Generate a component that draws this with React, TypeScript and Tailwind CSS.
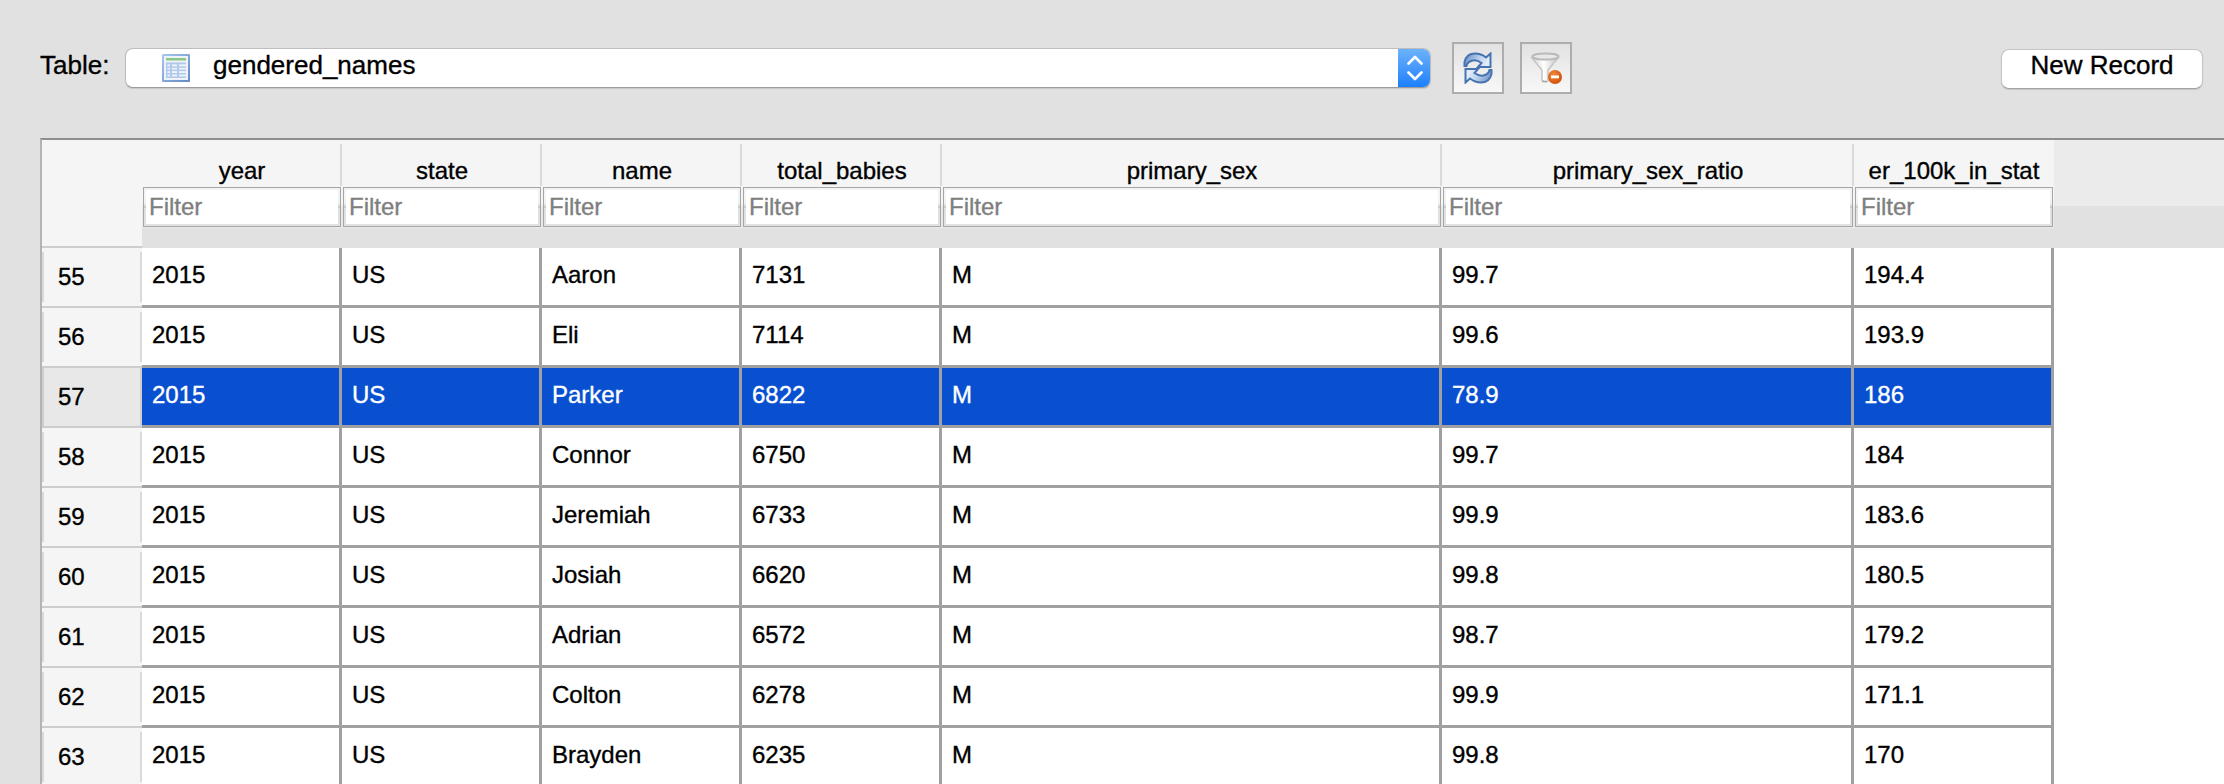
import React from "react";

const columns = [
  { name: "year", w: "w-[200px]" },
  { name: "state", w: "w-[200px]" },
  { name: "name", w: "w-[200px]" },
  { name: "total_babies", w: "w-[200px]" },
  { name: "primary_sex", w: "w-[500px]" },
  { name: "primary_sex_ratio", w: "w-[412px]" },
  { name: "er_100k_in_stat", w: "w-[200px]" },
];

const rows: [number, string[]][] = [
  [55, ["2015", "US", "Aaron", "7131", "M", "99.7", "194.4"]],
  [56, ["2015", "US", "Eli", "7114", "M", "99.6", "193.9"]],
  [57, ["2015", "US", "Parker", "6822", "M", "78.9", "186"]],
  [58, ["2015", "US", "Connor", "6750", "M", "99.7", "184"]],
  [59, ["2015", "US", "Jeremiah", "6733", "M", "99.9", "183.6"]],
  [60, ["2015", "US", "Josiah", "6620", "M", "99.8", "180.5"]],
  [61, ["2015", "US", "Adrian", "6572", "M", "98.7", "179.2"]],
  [62, ["2015", "US", "Colton", "6278", "M", "99.9", "171.1"]],
  [63, ["2015", "US", "Brayden", "6235", "M", "99.8", "170"]],
];
const selectedId = 57;

function TableIcon() {
  return (
    <svg width="28" height="28" viewBox="0 0 28 28" className="block shrink-0">
      <defs>
        <linearGradient id="tableFrame" x1="0" y1="0" x2="1" y2="1">
          <stop offset="0" stopColor="#a9c8ee" />
          <stop offset="1" stopColor="#6389c4" />
        </linearGradient>
      </defs>
      <rect width="28" height="28" rx="1" fill="url(#tableFrame)" />
      <rect x="2" y="2" width="24" height="24" fill="#eef3fa" />
      <rect x="4" y="4" width="20" height="2.5" fill="#8cc883" />
      <g fill="#b0c9ec">
        <rect x="4" y="8.500" width="20" height="1.800" />
        <rect x="4" y="12.300" width="20" height="1.500" />
        <rect x="4" y="15.600" width="20" height="1.500" />
        <rect x="4" y="19" width="20" height="1.500" />
        <rect x="4" y="22.400" width="20" height="1.500" />
        <rect x="4" y="8.500" width="1.500" height="15.400" />
        <rect x="8" y="8.500" width="2" height="15.400" />
        <rect x="15" y="8.500" width="2" height="15.400" />
      </g>
    </svg>
  );
}

function RefreshIcon() {
  const arrow = "M1.500 14V10Q3.500 1.500 12 1.500Q18 1.500 23 5.500L27.500 1.500V15H15L18.500 11Q13 7 8 9Q4 10.500 3.500 14Z";
  return (
    <svg width="30" height="32" viewBox="0 0 30 32">
      <defs>
        <linearGradient id="arrow" x1="0" y1="0" x2="1" y2="0.3">
          <stop offset="0" stopColor="#5f8ac4" />
          <stop offset="0.6" stopColor="#b9cfeb" />
          <stop offset="1" stopColor="#e2edf9" />
        </linearGradient>
      </defs>
      <g fill="url(#arrow)" stroke="#4774b1" strokeWidth="2">
        <path d={arrow} />
        <path d={arrow} transform="rotate(180 15 16)" />
      </g>
    </svg>
  );
}

function ClearFilterIcon() {
  return (
    <svg width="32" height="32" viewBox="0 0 32 32">
      <defs>
        <linearGradient id="funnel" x1="0" y1="0" x2="1" y2="0">
          <stop offset="0" stopColor="#d4d4d4" />
          <stop offset="0.45" stopColor="#ffffff" />
          <stop offset="1" stopColor="#c8c8c8" />
        </linearGradient>
        <radialGradient id="badge" cx="0.4" cy="0.35" r="0.7">
          <stop offset="0" stopColor="#f58a38" />
          <stop offset="1" stopColor="#cd4c06" />
        </radialGradient>
      </defs>
      <path d="M2 6L12 18V28Q15 31 18 29V18L28 6Z" fill="url(#funnel)" stroke="#c4c4c4" strokeWidth="1.500" />
      <ellipse cx="15.500" cy="4.500" rx="13" ry="3" fill="#e8e8e8" stroke="#bababa" strokeWidth="2" />
      <path d="M12 29.500H17" stroke="#a5a5a5" strokeWidth="1.500" />
      <circle cx="25" cy="25" r="7" fill="url(#badge)" />
      <rect x="21" y="23.500" width="8" height="2.800" fill="#fff" />
    </svg>
  );
}

export default function App() {
  return (
    <div className="flex h-[784px] w-[2224px] flex-col overflow-hidden bg-[#e1e1e1] font-['Liberation_Sans',Arial,sans-serif] text-[24px] leading-[27px] text-black [-webkit-text-stroke-width:0.35px]">
      <div className="flex h-[138px] shrink-0 items-start pl-10 text-[26px] leading-[30px]">
        <span className="mt-[50px] w-[85px] shrink-0 whitespace-nowrap">Table:</span>
        <div className="mt-12 flex h-10 w-[1306px] shrink-0 overflow-hidden rounded-[8px] border border-[#bdbdbd] border-b-[#9c9c9c] bg-white shadow-[0_1px_1px_rgba(0,0,0,0.12)]">
          <div className="flex flex-1 items-start pl-9 pt-[5px]">
            <TableIcon />
            <span className="-mt-[4px] ml-[23px]">gendered_names</span>
          </div>
          <div className="-my-px -mr-px flex w-[33px] items-center justify-center bg-linear-to-b from-[#6cb3fa] to-[#157efb]">
            <svg width="16" height="26" viewBox="0 0 16 26" fill="none" stroke="#fff" strokeWidth="2.600" strokeLinecap="round" strokeLinejoin="round">
              <path d="M1.500 8.500L8 2L14.500 8.500M1.500 17.500L8 24L14.500 17.500" />
            </svg>
          </div>
        </div>
        <button className="ml-[21px] mt-[42px] flex size-[52px] shrink-0 items-center justify-center border-2 border-[#adadad] bg-linear-to-b from-[#e2e2e2] to-[#f8f8f8]">
          <RefreshIcon />
        </button>
        <button className="ml-4 mt-[42px] flex size-[52px] shrink-0 items-center justify-center border-2 border-[#adadad] bg-linear-to-b from-[#e2e2e2] to-[#f8f8f8]">
          <ClearFilterIcon />
        </button>
        <button className="ml-auto mr-[21px] mt-[49px] flex h-10 w-[202px] items-start justify-center rounded-[8px] border border-[#c4c4c4] border-b-[#a2a2a2] bg-white leading-[30px] shadow-[0_1px_1px_rgba(0,0,0,0.12)]">
          New Record
        </button>
      </div>

      <div className="ml-10 flex h-[646px] flex-col border-l-2 border-t-2 border-l-[#b3b3b3] border-t-[#8e8e8e] bg-white">
        <div className="flex h-[108px] shrink-0 bg-[#e1e1e1]">
          <div className="w-[100px] border-b-2 border-[#cdcdcd] bg-[#f5f5f5]" />
          {columns.map((c, i) => (
            <div key={c.name} className={`${c.w} h-[88px] shrink-0 bg-linear-to-b from-[#f5f5f5] from-75% to-[#e9e9e9] to-75%`}>
              <div className="flex h-[47px]">
                <div className="flex-1 overflow-hidden whitespace-nowrap pl-0.5 pt-[17px] text-center">{c.name}</div>
                <div className={i < 6 ? "mt-1 h-[42px] w-0.5 bg-[#dadada]" : "w-0.5"} />
              </div>
              <div className="mx-px flex h-10 items-center border border-[#a6a6a6] bg-linear-to-b from-[#f3f3f3] from-40% to-[#e1e1e1] to-45%">
                <div className="h-0.5 w-0.5 bg-[#cdcdcd]" />
                <div className="h-[34px] flex-1 bg-white pl-[3px] pt-[3px] text-[#7f7f7f]">Filter</div>
                <div className="h-0.5 w-0.5 bg-[#cdcdcd]" />
              </div>
            </div>
          ))}
          <div className="h-[66px] flex-1 bg-[#ebebeb]" />
        </div>
        {rows.map(([id, cells]) => {
          const selected = id === selectedId;
          return (
            <div key={id} className="flex h-[60px] shrink-0">
              <div className={selected ? "w-[100px] border-2 border-t-0 border-[#cdcdcd] bg-[#e8e8e8] pl-3.5 pt-[15px]" : "flex w-[100px] flex-col border-b-2 border-[#cdcdcd] bg-[#f5f5f5]"}>
                {selected ? (
                  id
                ) : (
                  <div className="mt-1 h-[50px] border-x-2 border-[#dadada] pl-3.5 pt-[11px]">{id}</div>
                )}
              </div>
              {cells.map((v, i) => (
                <div
                  key={i}
                  className={`${columns[i].w} shrink-0 border-b-[3px] border-r-[3px] border-[#a0a0a3] pl-2.5 pt-[13px] ${selected ? "bg-[#0950d0] text-white" : "bg-white"}`}
                >
                  {v}
                </div>
              ))}
            </div>
          );
        })}
      </div>
    </div>
  );
}
